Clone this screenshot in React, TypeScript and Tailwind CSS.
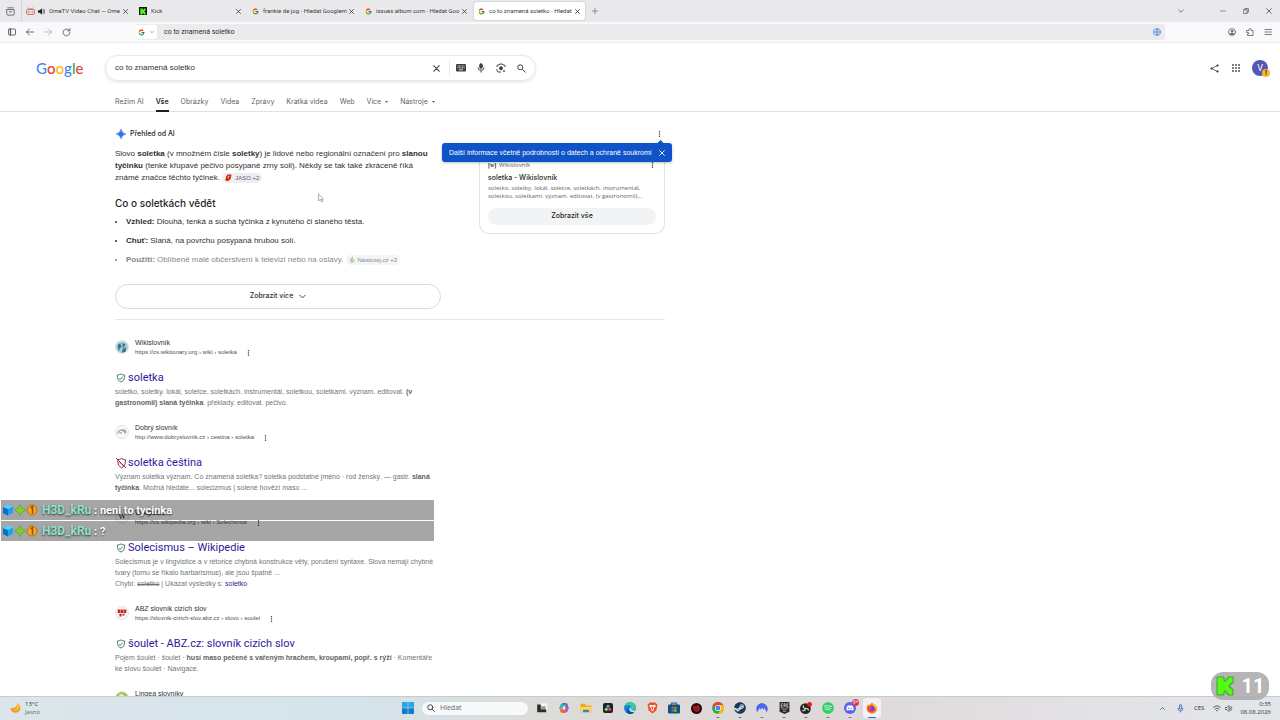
import type { ReactNode } from "react";
import { FcGoogle } from "react-icons/fc";
import { FaSteam, FaSpotify, FaDiscord } from "react-icons/fa";

const line = {
  fill: "none",
  stroke: "currentColor",
  strokeLinecap: "round" as const,
  strokeLinejoin: "round" as const,
};

function Cross({ className }: { className: string }) {
  return (
    <svg viewBox="0 0 10 10" className={className} {...line} strokeWidth="1.5">
      <path d="M1 1l8 8M9 1L1 9" />
    </svg>
  );
}

function Chevron({ className }: { className: string }) {
  return (
    <svg viewBox="0 0 10 10" className={className} {...line} strokeWidth="1.3">
      <path d="M1 3l4 4 4-4" />
    </svg>
  );
}

function Dots() {
  return (
    <svg viewBox="0 0 4 10" className="h-[6px] w-[3px]" fill="#3c4043">
      <circle cx="2" cy="1.3" r="1.2" />
      <circle cx="2" cy="5" r="1.2" />
      <circle cx="2" cy="8.7" r="1.2" />
    </svg>
  );
}

function KickLogo({ className }: { className: string }) {
  return (
    <svg viewBox="0 0 18 20" className={className}>
      <path
        d="M1 1h7v4h2V3h2V1h5v6h-2v2h-2v2h2v2h2v6h-5v-2h-2v-2H8v4H1z"
        fill="#53fc18"
        stroke="#1e7a10"
        strokeWidth=".6"
      />
    </svg>
  );
}

function Tab({ icon, title, active, sound }: { icon: ReactNode; title: string; active?: boolean; sound?: boolean }) {
  return (
    <div
      className={`flex h-[18px] w-[111px] shrink-0 items-center rounded-[3px] pr-[5px] pl-[4px] ${
        active ? "bg-white shadow-[0_0_2px_rgba(0,0,0,0.25)]" : ""
      }`}
    >
      {icon}
      {sound && (
        <svg viewBox="0 0 12 12" className="ml-[3px] h-[7px] w-[7px] shrink-0">
          <path d="M0 4h3l4-3.5v11L3 8H0z" fill="#222" />
          <path d="M8.500 3.500q2 2.500 0 5M10 1.500q3.500 4.500 0 9" stroke="#222" fill="none" />
        </svg>
      )}
      <span className="ml-[4px] min-w-0 flex-1 overflow-hidden text-[6px] leading-[10px] whitespace-nowrap text-[#3a3a40]">
        {title}
      </span>
      <button aria-label={`Zavřít ${title}`} className="ml-[2px] text-[#2b2b30]">
        <Cross className="h-[5px] w-[5px]" />
      </button>
    </div>
  );
}

function BrowserTabs() {
  const g = <FcGoogle className="h-[7px] w-[7px] shrink-0" />;
  return (
    <div className="flex h-[22px] shrink-0 items-center bg-[#e9e9eb] text-[#5b5b66]">
      <button aria-label="Firefox View" className="flex w-[21px] justify-center">
        <svg viewBox="0 0 16 16" className="h-[9px] w-[9px]" {...line} strokeWidth="1.5">
          <path d="M3 1.500h10M1.500 4.500h13v8q0 2-2 2h-9q-2 0-2-2zM6 8.500h4" />
        </svg>
      </button>
      <div className="h-full w-px bg-[#d5d5d8]" />
      <div className="flex gap-[2px]">
        <Tab
          sound
          title="OmeTV Video Chat — Ome"
          icon={
            <svg viewBox="0 0 16 14" className="h-[8px] w-[9px] shrink-0" fill="none" stroke="#c9483f" strokeWidth="1.400">
              <rect x="1" y="4" width="14" height="9" rx="2" />
              <path d="M4 1l3 3M12 1L9 4M4 7l2 1.500L4 10M12 7l-2 1.500 2 1.500" />
            </svg>
          }
        />
        <Tab
          title="Kick"
          icon={
            <span className="flex h-[8px] w-[8px] shrink-0 items-center justify-center bg-[#0b1a08]">
              <KickLogo className="h-[7px] w-[6px]" />
            </span>
          }
        />
        <Tab title="frankie de jog - Hledat Googlem" icon={g} />
        <Tab title="issues album corn - Hledat Goo" icon={g} />
        <Tab active title="co to znamená soletko - Hledat" icon={g} />
      </div>
      <button aria-label="Nový panel" className="ml-[7px]">
        <svg viewBox="0 0 10 10" className="h-[6px] w-[6px]" {...line}>
          <path d="M5 0v10M0 5h10" />
        </svg>
      </button>
      <div className="ml-auto flex items-center pr-[8px]">
        <button aria-label="Seznam panelů" className="mr-[36px]">
          <Chevron className="h-[6px] w-[6px]" />
        </button>
        <button aria-label="Minimalizovat" className="mr-[17px]">
          <svg viewBox="0 0 10 10" className="h-[6px] w-[6px]" {...line}>
            <path d="M0 5h10" />
          </svg>
        </button>
        <button aria-label="Obnovit" className="mr-[17px]">
          <svg viewBox="0 0 10 10" className="h-[6px] w-[6px]" {...line} strokeWidth="1.300">
            <path d="M1 3h6v6H1zM3 3V1h6v6H7" />
          </svg>
        </button>
        <button aria-label="Zavřít okno">
          <Cross className="h-[6px] w-[6px]" />
        </button>
      </div>
    </div>
  );
}

function Toolbar() {
  return (
    <div className="flex h-[21px] shrink-0 items-center border-b border-[#ececee] bg-[#f9f9fb] text-[#5b5b66]">
      <div className="flex w-[135px] items-center gap-[10px] pl-[8px]">
        <button aria-label="Postranní lišta">
          <svg viewBox="0 0 16 16" className="h-[8px] w-[8px]" {...line} strokeWidth="1.800">
            <rect x="1" y="2" width="14" height="12" rx="1.500" />
            <path d="M5 2v12" strokeWidth="2.500" />
          </svg>
        </button>
        <button aria-label="Zpět">
          <svg viewBox="0 0 16 16" className="h-[8px] w-[8px]" {...line} strokeWidth="1.800">
            <path d="M15 8H1M7 2L1 8l6 6" />
          </svg>
        </button>
        <button aria-label="Vpřed" className="text-[#b5b5bb]">
          <svg viewBox="0 0 16 16" className="h-[8px] w-[8px]" {...line} strokeWidth="1.800">
            <path d="M1 8h14M9 2l6 6-6 6" />
          </svg>
        </button>
        <button aria-label="Obnovit stránku">
          <svg viewBox="0 0 16 16" className="h-[9px] w-[9px]" {...line} strokeWidth="1.600">
            <path d="M14 8a6 6 0 1 1-2-4.500L14 5M14 1v4h-4" />
          </svg>
        </button>
      </div>
      <div className="mr-[63px] flex h-[16px] flex-1 items-center rounded-[3px] bg-[#ebebed] pr-[2px]">
        <button aria-label="Vyhledávač" className="flex h-[14px] w-[22px] items-center justify-center gap-[5px] rounded-[2px] bg-white">
          <FcGoogle className="h-[7px] w-[7px]" />
          <Chevron className="h-[4px] w-[4px]" />
        </button>
        <input
          aria-label="Adresa"
          defaultValue="co to znamená soletko"
          className="ml-[7px] min-w-0 flex-1 bg-transparent text-[7px] leading-[12px] text-[#2b2b30] outline-none"
        />
        <button aria-label="Přeložit" className="rounded-[2px] bg-[#e6eaf1] p-[2px] text-[#5b86d6]">
          <svg viewBox="0 0 16 16" className="h-[8px] w-[8px]" {...line} strokeWidth="1.500">
            <circle cx="8" cy="8" r="7" />
            <path d="M1 8h14M8 1Q3 8 8 15M8 1q5 7 0 14" />
          </svg>
        </button>
      </div>
      <div className="flex items-center gap-[10px] pr-[8px]">
        <button aria-label="Účet">
          <svg viewBox="0 0 16 16" className="h-[8px] w-[8px]" {...line} strokeWidth="1.500">
            <circle cx="8" cy="8" r="7" />
            <path d="M4 12q4-5 8 0z" fill="currentColor" />
            <circle cx="8" cy="6" r="1.800" fill="currentColor" />
          </svg>
        </button>
        <button aria-label="Rozšíření">
          <svg viewBox="0 0 16 16" className="h-[8px] w-[8px]" {...line} strokeWidth="1.600">
            <path d="M2 5h4V3q0-2 2-2t2 2v2h4v10H3v-3h1q2 0 2-1.500T4 9H2z" />
          </svg>
        </button>
        <button aria-label="Nabídka">
          <svg viewBox="0 0 16 16" className="h-[8px] w-[8px]" {...line} strokeWidth="1.600">
            <path d="M2 3h13M2 8h13M2 13h13" />
          </svg>
        </button>
      </div>
    </div>
  );
}

function SearchHeader() {
  return (
    <header className="shrink-0 border-b border-[#dfe1e5]">
      <div className="flex items-center pt-[12px] pr-[12px]">
        <a
          href="#"
          aria-label="Google"
          className="flex w-[105px] pl-[36px] font-['Lato',sans-serif] text-[15px] leading-[20px] font-medium"
        >
          <span className="text-[#4285f4]">G</span>
          <span className="text-[#ea4335]">o</span>
          <span className="text-[#fbbc05]">o</span>
          <span className="text-[#4285f4]">g</span>
          <span className="text-[#34a853]">l</span>
          <span className="text-[#ea4335]">e</span>
        </a>
        <form className="flex h-[26px] w-[431px] items-center rounded-full border border-[#e6e8ea] pr-[9px] pl-[9px] text-[#3c4043] shadow-[0_1px_3px_rgba(60,64,67,0.15)]">
          <input
            aria-label="Hledat"
            defaultValue="co to znamená soletko"
            className="min-w-0 flex-1 bg-transparent font-['Liberation_Sans',sans-serif] text-[8px] leading-[16px] text-[#303134] outline-none"
          />
          <button type="button" aria-label="Vymazat">
            <Cross className="h-[7px] w-[7px]" />
          </button>
          <div className="mr-[6px] ml-[9px] h-[16px] w-px bg-[#e6e8ea]" />
          <button type="button" aria-label="Klávesnice">
            <svg viewBox="0 0 20 16" className="h-[8px] w-[10px]">
              <rect width="20" height="15" rx="2" fill="#3c4043" />
              <path d="M3 4h14M3 7.500h14" stroke="#fff" strokeWidth="1.500" strokeDasharray="2 1" />
              <path d="M6 11.500h8" stroke="#fff" strokeWidth="1.500" />
            </svg>
          </button>
          <button type="button" aria-label="Hlasové vyhledávání" className="ml-[11px]">
            <svg viewBox="0 0 16 20" className="h-[10px] w-[8px]" fill="none" stroke="#3c4043" strokeWidth="2">
              <rect x="5.500" y="1.500" width="5" height="9" rx="2.500" fill="#3c4043" />
              <path d="M2 9q0 5.500 6 5.500T14 9M8 15v4" />
            </svg>
          </button>
          <button type="button" aria-label="Vyhledávání obrázkem" className="ml-[11px]">
            <svg viewBox="0 0 20 20" className="h-[10px] w-[10px]" fill="none" stroke="#3c4043" strokeWidth="2">
              <path d="M2 8V6q0-2 2-2h2l1.500-2h5L14 4h2q2 0 2 2v2M2 12v3q0 3 3 3h5" />
              <circle cx="10" cy="10.500" r="3" fill="#3c4043" />
              <circle cx="16" cy="16" r="1" fill="#3c4043" />
            </svg>
          </button>
          <button type="submit" aria-label="Hledat Googlem" className="ml-[11px]">
            <svg viewBox="0 0 18 18" className="h-[9px] w-[9px]" fill="none" stroke="#3c4043" strokeWidth="2">
              <circle cx="6.500" cy="6.500" r="5" />
              <path d="M10.500 10.500L17 17" />
            </svg>
          </button>
        </form>
        <div className="ml-auto flex items-center gap-[12px]">
          <button aria-label="Sdílet" className="mr-px">
            <svg viewBox="0 0 18 18" className="h-[9px] w-[9px]" fill="#3c4043" stroke="#3c4043" strokeWidth="1.500">
              <path d="M15 3L3 9l12 6" fill="none" />
              <circle cx="15" cy="3" r="1.500" />
              <circle cx="3" cy="9" r="1.500" />
              <circle cx="15" cy="15" r="1.500" />
            </svg>
          </button>
          <button aria-label="Aplikace Google">
            <svg viewBox="0 0 16 16" className="h-[8px] w-[8px]" fill="#3c4043">
              {[2, 8, 14].map((y) => [2, 8, 14].map((x) => <circle key={`${x}-${y}`} cx={x} cy={y} r="1.800" />))}
            </svg>
          </button>
          <button
            aria-label="Účet Google"
            className="relative h-[16px] w-[16px] rounded-full bg-[#5357b4] text-[9px] leading-[16px] text-white"
          >
            V
            <span className="absolute -right-[2px] -bottom-px h-[8px] w-[8px] rounded-full bg-[#f5b82e] text-[7px] leading-[8px] font-bold text-[#3c2a00]">
              !
            </span>
          </button>
        </div>
      </div>
      <nav className="flex gap-[12px] pt-[16px] pl-[115px] font-['Inter',sans-serif] text-[7px] leading-[10px] text-[#5f6368]">
        <a href="#">Režim AI</a>
        <a href="#" className="-mb-px h-[15px] border-b-2 border-[#1f1f1f] font-semibold text-[#1f1f1f]">
          Vše
        </a>
        <a href="#">Obrázky</a>
        <a href="#">Videa</a>
        <a href="#">Zprávy</a>
        <a href="#">Krátká videa</a>
        <a href="#">Web</a>
        <button className="flex h-[10px] items-center gap-[4px]">
          Více <Caret />
        </button>
        <button className="flex h-[10px] items-center gap-[4px]">
          Nástroje <Caret />
        </button>
      </nav>
    </header>
  );
}

function Caret() {
  return (
    <svg viewBox="0 0 6 4" className="h-[2px] w-[3px]" fill="#5f6368">
      <path d="M0 0h6L3 4z" />
    </svg>
  );
}

function Overview() {
  return (
    <section className="flex w-[550px] justify-between border-b border-[#e3e6ea] pt-[16px] pb-[10px] font-['Open_Sans',sans-serif]">
      <div className="w-[326px]">
        <h2 className="flex items-center gap-[4px] pl-px font-['Inter',sans-serif] text-[7px] leading-[12px] font-medium text-[#1f1f1f]">
          <svg viewBox="0 0 20 20" className="h-[10px] w-[10px]">
            <path d="M10 0q1.500 8.500 10 10-8.500 1.500-10 10Q8.500 11.500 0 10 8.500 8.500 10 0z" fill="#3271ea" stroke="#3271ea" />
          </svg>
          Přehled od AI
        </h2>
        <p className="mt-[8px] font-['Liberation_Sans',sans-serif] text-[8px] leading-[12px] whitespace-nowrap text-[#303134]">
          Slovo <b>soletka</b> (v množném čísle <b>soletky</b>) je lidové nebo regionální označení pro <b>slanou</b>
          <br />
          <b>tyčinku</b> (tenké křupavé pečivo posypané zrny soli). Někdy se tak také zkráceně říká
          <br />
          známé značce těchto tyčinek.{" "}
          <span className="inline-flex h-[10px] items-center gap-[3px] rounded-full bg-[#eceef1] px-[3px] align-middle text-[6px] leading-[10px] text-[#5f6368]">
            <svg viewBox="0 0 14 14" className="h-[7px] w-[7px]">
              <path d="M5 1h8l-2 9-5 4-5-1 1-7z" fill="#d8170f" />
              <path d="M6 4l3-1-1 4-3 3z" fill="#ffd54a" />
            </svg>
            JASO +2
          </span>
        </p>
        <h3 className="mt-[11px] font-['Inter',sans-serif] text-[10px] leading-[16px] font-medium text-[#1f1f1f]">
          Co o soletkách vědět
        </h3>
        <ul className="mt-[5px] flex list-disc flex-col gap-[7px] pl-[11px] font-['Liberation_Sans',sans-serif] text-[8px] leading-[12px] whitespace-nowrap text-[#303134]">
          <li>
            <b>Vzhled:</b> Dlouhá, tenká a suchá tyčinka z kynutého či slaného těsta.
          </li>
          <li>
            <b>Chuť:</b> Slaná, na povrchu posypaná hrubou solí.
          </li>
          <li className="opacity-60">
            <b>Použití:</b> Oblíbené malé občerstvení k televizi nebo na oslavy.{" "}
            <span className="inline-flex h-[10px] items-center gap-[3px] rounded-full bg-[#eceef1] px-[3px] align-middle text-[6px] leading-[10px]">
              <svg viewBox="0 0 12 14" className="h-[7px] w-[6px]">
                <path d="M8 0Q5 4 3 6q-3 5 2 8 6-1 6-6Q7 6 8 0z" fill="#5fbf4a" />
                <path d="M5 12l3-5" stroke="#fff" />
              </svg>
              Nastoxej.cz +3
            </span>
          </li>
        </ul>
        <button className="mt-[18px] flex h-[25px] w-full items-center justify-center gap-[6px] rounded-full border border-[#d2dbe6] font-['Inter',sans-serif] text-[7px] font-medium text-[#303134]">
          Zobrazit více <Chevron className="h-[7px] w-[7px]" />
        </button>
      </div>
      <aside className="relative w-[186px]">
        <button aria-label="Další možnosti" className="ml-auto flex h-[12px] w-[7px]">
          <span className="pt-[3px]">
            <Dots />
          </span>
        </button>
        <article className="mt-[10px] rounded-b-[10px] border border-t-0 border-[#dfe1e5] px-[8px] pt-[10px] pb-[8px]">
          <div className="flex h-[10px] items-center gap-[3px] text-[6px] leading-[10px] text-[#5f6368]">
            <span className="w-[8px] font-['Liberation_Serif',serif] font-bold text-[#303134]">[w]</span>
            Wikislovník
            <button aria-label="O výsledku" className="mr-[2px] ml-auto">
              <Dots />
            </button>
          </div>
          <h4 className="mt-[2px] font-['Inter',sans-serif] text-[7px] leading-[12px] font-medium text-[#1f1f1f]">
            soletka - Wikislovník
          </h4>
          <p className="text-[6px] leading-[8px] whitespace-nowrap text-[#5f6368]">
            soletko, soletky. lokál, soletce, soletkách. instrumentál,
            <br />
            soletkou, soletkami. význam. editovat. (v gastronomii)...
          </p>
          <button className="mt-[6px] h-[17px] w-full rounded-full bg-[#f1f3f4] font-['Inter',sans-serif] text-[7px] font-medium text-[#1f1f1f]">
            Zobrazit vše
          </button>
        </article>
        <div
          role="tooltip"
          className="absolute top-[15px] -right-[7px] flex h-[19px] w-[230px] items-center justify-between rounded-[3px] bg-[#0f53c9] px-[7px] font-['Liberation_Sans',sans-serif] text-[7px] leading-[10px] whitespace-nowrap text-white shadow-[0_1px_3px_rgba(0,0,0,0.25)]"
        >
          <span className="absolute -top-[2px] right-[9px] h-[5px] w-[5px] rotate-45 bg-[#0f53c9]" />
          Další informace včetně podrobností o datech a ochraně soukromí
          <button aria-label="Zavřít nápovědu">
            <Cross className="h-[6px] w-[6px]" />
          </button>
        </div>
      </aside>
    </section>
  );
}

function Shield({ bad }: { bad?: boolean }) {
  return bad ? (
    <svg viewBox="0 0 24 24" className="h-[12px] w-[12px] shrink-0" fill="none" stroke="#a32a48" strokeWidth="2">
      <path d="M6 5q4 0 7-2 3 2 8 2.500Q21 15 17 19l-4 3Q5 18 5 7M2 2l20 20M9 10l8 8" />
    </svg>
  ) : (
    <svg viewBox="0 0 20 22" className="mr-px ml-px h-[10px] w-[10px] shrink-0" fill="none" stroke="#2f7560" strokeWidth="2">
      <path d="M10 2q3 2 8 2.500Q19 16 10 20 1 16 2 4.500 7 4 10 2zM6 11l3 3 5-6" />
    </svg>
  );
}

function Result({ icon, site, url, title, bad, children }: { icon: ReactNode; site: string; url: string; title: string; bad?: boolean; children?: ReactNode }) {
  return (
    <article className="mb-[15px] font-['Liberation_Sans',sans-serif] whitespace-nowrap">
      <div className="flex items-start">
        <span className="mt-[2px] flex h-[14px] w-[14px] items-center justify-center overflow-hidden rounded-full border border-[#dfe1e5] bg-[#f8f9fa]">
          {icon}
        </span>
        <div className="ml-[6px]">
          <div className="text-[7px] leading-[10px] text-[#303134]">{site}</div>
          <div className="flex items-center gap-[10px] text-[6px] leading-[9px] text-[#4d5156]">
            {url}
            <button aria-label={`O výsledku ${site}`}>
              <Dots />
            </button>
          </div>
        </div>
      </div>
      <h3 className="mt-[13px] font-['Roboto',sans-serif] text-[11px] leading-[16px] text-[#2c1a9c]">
        <a href="#" className="flex items-center gap-px">
          <Shield bad={bad} />
          {title}
        </a>
      </h3>
      <p className="text-[7px] leading-[11px] text-[#70757a] [&_b]:text-[#5f6368]">{children}</p>
    </article>
  );
}

function Results() {
  return (
    <section className="pt-[18px]">
      <Result
        site="Wikislovník"
        url="https://cs.wiktionary.org › wiki › soletka"
        title="soletka"
        icon={
          <svg viewBox="0 0 14 14" className="h-[13px] w-[13px]">
            <rect width="14" height="14" fill="#a9cdd6" />
            <path d="M2 4l3-2 1 4-3 5zM7 2l4 1-2 4zM8 8l4-1-1 5-4 1z" fill="#2c6f91" />
            <path d="M3 9l4-4 4 6" stroke="#4e9b7b" fill="none" />
          </svg>
        }
      >
        soletko, soletky. lokál, soletce, soletkách. instrumentál, soletkou, soletkami. význam. editovat. <b>(v</b>
        <br />
        <b>gastronomii) slaná tyčinka</b>. překlady. editovat. pečivo.
      </Result>
      <Result
        bad
        site="Dobrý slovník"
        url="http://www.dobryslovnik.cz › cestina › soletka"
        title="soletka čeština"
        icon={
          <svg viewBox="0 0 14 14" className="h-[12px] w-[12px]" fill="none" strokeWidth="1.500">
            <path d="M2 9q1-5 5-4t3 4" stroke="#c99a8e" />
            <path d="M6 5q5-2 6 3M4 8h3" stroke="#9aa3a0" />
          </svg>
        }
      >
        Význam soletka význam. Co znamená soletka? soletka podstatné jméno · rod ženský. — gastr. <b>slaná</b>
        <br />
        <b>tyčinka</b>. Možná hledáte... solecizmus | solené hovězí maso ...
      </Result>
      <Result
        site="Wikipedie"
        url="https://cs.wikipedia.org › wiki › Solecismus"
        title="Solecismus – Wikipedie"
        icon={<span className="font-['Liberation_Serif',serif] text-[8px] leading-[12px] text-[#202124]">W</span>}
      >
        Solecismus je v lingvistice a v rétorice chybná konstrukce věty, porušení syntaxe. Slova nemají chybné
        <br />
        tvary (tomu se říkalo barbarismus), ale jsou špatně ...
        <br />
        Chybí: <s>soletko</s> | Ukázat výsledky s:{" "}
        <a href="#" className="text-[#2c1a9c]">
          soletko
        </a>
      </Result>
      <Result
        site="ABZ slovník cizích slov"
        url="https://slovnik-cizich-slov.abz.cz › slovo › soulet"
        title="šoulet - ABZ.cz: slovník cizích slov"
        icon={
          <svg viewBox="0 0 14 14" className="h-[12px] w-[12px]" fill="#c8281e">
            <path d="M2 3h3v4H2zM5.500 3h3v4h-3zM9 3h3v4H9zM4 8h2.500v3H4zM7.500 8H10v2H7.500z" />
          </svg>
        }
      >
        Pojem šoulet · šoulet · <b>husí maso pečené s vařeným hrachem, kroupami, popř. s rýží</b> · Komentáře
        <br />
        ke slovu šoulet · Navigace.
      </Result>
      <Result
        site="Lingea slovníky"
        url="https://slovniky.lingea.cz"
        title="soletka"
        icon={
          <svg viewBox="0 0 14 14" className="h-[14px] w-[14px]">
            <rect width="14" height="14" fill="#9cc84a" />
            <path d="M4 4q4-2 5 2l-2 4" stroke="#fff" strokeWidth="1.500" fill="none" />
          </svg>
        }
      />
    </section>
  );
}

function ChatLine({ text }: { text: string }) {
  return (
    <div className="flex h-[20px] items-center bg-black/35 pl-px text-[12px] font-bold whitespace-pre text-white [text-shadow:0_1px_2px_rgba(0,0,0,0.7)]">
      <svg viewBox="0 0 72 24" className="h-[12px] w-[36px]">
        <path d="M2 6l10-5 10 4v13l-10 5-10-5z" fill="#18a4f0" />
        <path d="M2 6l10 4v13L2 18z" fill="#0d6fc4" />
        <path d="M2 6l10-5 10 4-10 5z" fill="#5cd0fb" />
        <path d="M36 1q2 8 11 11-9 3-11 11-2-8-11-11 9-3 11-11z" fill="#7ed321" stroke="#3d9c12" />
        <circle cx="60" cy="12" r="10" fill="#f5a623" stroke="#b86f0a" strokeWidth="2" />
        <path d="M57 8l4-3v14" stroke="#8a5208" strokeWidth="3" fill="none" />
      </svg>
      <p className="ml-[4px]">
        <span className="text-[#8fe3cb]">H3D_kRu</span>
        <span className="text-[11px]"> : {text}</span>
      </p>
    </div>
  );
}

function TaskbarApp({ label, running, active, children }: { label: string; running?: boolean; active?: boolean; children: ReactNode }) {
  return (
    <button
      aria-label={label}
      className={`relative flex h-[20px] w-[18px] items-center justify-center rounded-[3px] ${active ? "bg-white/60" : ""}`}
    >
      {children}
      {(running || active) && (
        <span
          className={`absolute bottom-0 left-1/2 h-px -translate-x-1/2 rounded-full ${active ? "w-[8px] bg-[#1976c5]" : "w-[3px] bg-[#777]"}`}
        />
      )}
    </button>
  );
}

const ic = "h-[12px] w-[12px]";

function Taskbar() {
  return (
    <footer className="grid h-[24px] shrink-0 grid-cols-[1fr_auto_1fr] items-center border-t border-[#c3cdcf] bg-[linear-gradient(90deg,#dbe6ea_0%,#d5e3ec_28%,#dcdcd8_42%,#dfd8da_65%,#e3e3e6_88%,#e2e6ea_100%)] pb-px font-['Open_Sans',sans-serif] text-[#333]">
      <div className="flex items-center gap-[4px] pl-[9px] text-[6px] leading-[8px]">
        <svg viewBox="0 0 20 20" className={ic}>
          <path d="M14 2q1 8-12 9 2 7 9 7 8-1 8-8 0-6-5-8z" fill="#f29a1f" />
          <path d="M14 2q2 9-8 12 10 1 12-7-1-4-4-5z" fill="#ffc53d" />
        </svg>
        <div>
          <div>13°C</div>
          <div className="text-[#666]">Jasno</div>
        </div>
      </div>
      <div className="flex items-center gap-[4px]">
        <TaskbarApp label="Start">
          <svg viewBox="0 0 20 20" className={ic}>
            <path d="M0 0h9.500v9.500H0zM10.500 0H20v9.500h-9.500z" fill="#2ba5e6" />
            <path d="M0 10.500h9.500V20H0zM10.500 10.500H20V20h-9.500z" fill="#0c7fd0" />
          </svg>
        </TaskbarApp>
        <label className="flex h-[15px] w-[108px] items-center gap-[5px] rounded-full border border-[#d9dde0] bg-[#f6f8fa] pl-[5px]">
          <svg viewBox="0 0 16 16" className="h-[8px] w-[8px]" {...line} strokeWidth="1.800">
            <circle cx="6.500" cy="6.500" r="5" />
            <path d="M10.500 10.500L15 15" />
          </svg>
          <input
            aria-label="Hledat v počítači"
            placeholder="Hledat"
            className="w-[80px] bg-transparent text-[7px] leading-[10px] outline-none placeholder:text-[#666]"
          />
        </label>
        <TaskbarApp label="Zobrazení úloh">
          <svg viewBox="0 0 20 20" className={ic}>
            <rect x="7" y="2" width="12" height="13" fill="#f5f5f5" />
            <path d="M2 4h6v8h9v5H2z" fill="#2a2a2a" />
            <rect x="8" y="7" width="8" height="5" fill="#9a9a9a" />
          </svg>
        </TaskbarApp>
        <TaskbarApp label="Copilot">
          <svg viewBox="0 0 20 20" className={ic} fill="none" strokeWidth="5" strokeLinejoin="round">
            <path d="M7 4h6l2 5" stroke="#2878e0" />
            <path d="M7 4L4 12" stroke="#27b8c8" />
            <path d="M4 12h4l4-7" stroke="#e8b330" strokeWidth="3" />
            <path d="M13 16H7l-2-4" stroke="#f0633f" />
            <path d="M13 16l3-8" stroke="#b452d8" />
            <path d="M9 12l2-4" stroke="#f3f0f0" strokeWidth="2.500" />
          </svg>
        </TaskbarApp>
        <TaskbarApp label="Průzkumník souborů">
          <svg viewBox="0 0 20 20" className={ic}>
            <path d="M1 3h7l2 3h9v11H1z" fill="#e8a81c" />
            <path d="M1 8h18v9H1z" fill="#ffd55a" />
            <path d="M5 13h10v4H5z" fill="#2a86d8" />
          </svg>
        </TaskbarApp>
        <TaskbarApp label="DaVinci Resolve">
          <svg viewBox="0 0 20 20" className="h-[10px] w-[10px]">
            <rect width="20" height="20" rx="4" fill="#1d222b" />
            <circle cx="10" cy="6.500" r="3" fill="#59b8e8" />
            <circle cx="6.500" cy="12.500" r="3" fill="#c6d84a" />
            <circle cx="13.500" cy="12.500" r="3" fill="#e85050" />
          </svg>
        </TaskbarApp>
        <TaskbarApp label="Microsoft Edge">
          <svg viewBox="0 0 20 20" className={ic}>
            <circle cx="10" cy="10" r="10" fill="#1686d8" />
            <path d="M0 9Q2 0 11 0q9 1 9 9 0 4-5 4-3 0-3-2 1-5-4-6-6 0-8 4z" fill="#3fc9a0" />
            <path d="M7 9q-1 8 10 8-4 4-9 3-6-4-1-11z" fill="#0b4fa0" />
            <path d="M12 11q-1 4 7 3l-2 3q-8 0-8-5 0-3 3-3z" fill="#dfe3e2" />
          </svg>
        </TaskbarApp>
        <TaskbarApp label="Brave">
          <svg viewBox="0 0 20 22" className="h-[12px] w-[11px]">
            <path d="M5 1h10l4 4-2 10-7 6-7-6L1 5z" fill="#f04c23" />
            <path d="M5 5l5 1 5-1 1 3-4 4 1 2-3 3-3-3 1-2-4-4z" fill="#fff" />
            <path d="M7 8l3 1 3-1-2 3v3H9v-3z" fill="#f04c23" />
          </svg>
        </TaskbarApp>
        <TaskbarApp label="Microsoft Store">
          <svg viewBox="0 0 20 20" className={ic}>
            <path d="M6 5V2h8v3" stroke="#2c6fa8" strokeWidth="2" fill="none" />
            <rect y="4" width="20" height="15" rx="2" fill="#174f80" />
            <path d="M6 8h3.500v3.500H6z" fill="#f25022" />
            <path d="M10.500 8H14v3.500h-3.500z" fill="#7fba00" />
            <path d="M6 12.500h3.500V16H6z" fill="#00a4ef" />
            <path d="M10.500 12.500H14V16h-3.500z" fill="#ffb900" />
          </svg>
        </TaskbarApp>
        <TaskbarApp label="Hra">
          <svg viewBox="0 0 20 20" className="h-[11px] w-[11px]">
            <circle cx="10" cy="10" r="10" fill="#26090c" />
            <path d="M5 6l4 2 4-3 2 5-3 5-4-1-3-3z" fill="#7d1420" stroke="#c4202f" strokeWidth="2" />
          </svg>
        </TaskbarApp>
        <TaskbarApp label="Google Chrome" running>
          <svg viewBox="0 0 20 20" className={ic}>
            <circle cx="10" cy="10" r="10" fill="#34a853" />
            <path d="M1.300 5A10 10 0 0 1 18.700 5H10l-4 7.500z" fill="#ea4335" />
            <path d="M18.700 5A10 10 0 0 1 10 20l4.300-7.500L10 5z" fill="#fbbc05" />
            <circle cx="10" cy="10" r="5" fill="#fff" />
            <circle cx="10" cy="10" r="4" fill="#4285f4" />
          </svg>
        </TaskbarApp>
        <TaskbarApp label="Steam" running>
          <FaSteam className={`${ic} text-[#15395e]`} />
        </TaskbarApp>
        <TaskbarApp label="NordVPN" running>
          <svg viewBox="0 0 20 20" className={ic}>
            <path d="M2 17Q-2 8 4 4q6-5 12 0 6 5 2 13l-4-7-2 3-2-4-2 4-2-3z" fill="#4a66f5" />
          </svg>
        </TaskbarApp>
        <TaskbarApp label="Epic Games" running>
          <svg viewBox="0 0 20 22" className="h-[12px] w-[11px]">
            <path d="M1 0h18v18l-9 4-9-4z" fill="#2b2b2b" />
            <path d="M7 3H4v7h3M4 6.500h2.500M9 10V3h2v4H9M13 3v7M17 4V3h-2v7h2V9M5 13h10M7 17h6" stroke="#fff" fill="none" />
          </svg>
        </TaskbarApp>
        <TaskbarApp label="OBS Studio" running>
          <svg viewBox="0 0 20 20" className={ic}>
            <circle cx="9" cy="11" r="9" fill="#252525" />
            <path d="M9 11q-5-1-3-5M9 11q5-1 5 3M9 11q-1 5-5 3" stroke="#ddd" strokeWidth="2" fill="none" />
            <circle cx="16" cy="4" r="4" fill="#f01818" />
          </svg>
        </TaskbarApp>
        <TaskbarApp label="Spotify" running>
          <FaSpotify className={`${ic} text-[#1ed760]`} />
        </TaskbarApp>
        <TaskbarApp label="Discord" running>
          <span className="flex h-[12px] w-[12px] items-center justify-center rounded-full bg-[#5865f2] text-white">
            <FaDiscord className="h-[8px] w-[8px]" />
          </span>
          <span className="absolute top-px right-0 h-[7px] w-[7px] rounded-full bg-[#d43c52] text-[5px] leading-[7px] text-white">
            9+
          </span>
        </TaskbarApp>
        <TaskbarApp label="Firefox" active>
          <svg viewBox="0 0 20 20" className={ic}>
            <path d="M3 4l3 1 4-4q1 3 5 3 5 5 3 10-3 6-9 5-8-1-8-9z" fill="#ff7a1a" />
            <path d="M10 1q2 3 5 3 5 5 3 10-1-5-5-6z" fill="#ffc62e" />
            <circle cx="10" cy="11" r="4.500" fill="#7a3be0" />
            <path d="M2 8q4-1 6 1l3 1q-2 3-5 2 2 4 7 3-4 4-8 1Q2 13 2 8z" fill="#f5414e" />
          </svg>
        </TaskbarApp>
      </div>
      <div className="flex items-center justify-end pr-[9px] text-[6px] leading-[8px]">
        <button aria-label="Skryté ikony" className="mr-[12px]">
          <Chevron className="h-[5px] w-[5px] rotate-180" />
        </button>
        <svg viewBox="0 0 12 16" className="mr-[10px] h-[9px] w-[7px]" fill="none" stroke="#4a62b8" strokeWidth="1.500">
          <rect x="4" y="1" width="4" height="8" rx="2" fill="#b9c6ee" />
          <path d="M1.500 7q0 5 4.500 5t4.500-5M6 12v3" />
        </svg>
        <span className="mr-[9px]">CES</span>
        <svg viewBox="0 0 16 14" className="mr-[4px] h-[7px] w-[8px]" {...line} strokeWidth="1.500">
          <path d="M1 5q7-7 14 0M4 8q4-4 8 0M7 11q1-1 2 0" />
        </svg>
        <svg viewBox="0 0 16 14" className="mr-[7px] h-[7px] w-[8px]" {...line} strokeWidth="1.300">
          <path d="M1 5h3l4-4v12L4 9H1zM10 5q2 2 0 4M12 3q4 4 0 8" />
        </svg>
        <div className="text-right">
          <div>0:35</div>
          <div>08.08.2026</div>
        </div>
      </div>
    </footer>
  );
}

export default function App() {
  return (
    <div className="relative flex h-screen flex-col overflow-hidden bg-white font-['Roboto',sans-serif]">
      <BrowserTabs />
      <Toolbar />
      <SearchHeader />
      <main className="min-h-0 flex-1 overflow-hidden pl-[115px]">
        <Overview />
        <Results />
      </main>
      <Taskbar />

      <div className="absolute top-[500px] left-px flex w-[433px] flex-col gap-px">
        <ChatLine text="neni to tycinka" />
        <ChatLine text="?" />
      </div>

      <div className="absolute right-[11px] bottom-[20px] flex h-[28px] w-[58px] items-center justify-center gap-[8px] rounded-[12px] bg-[#adadad]/90">
        <KickLogo className="h-[20px] w-[18px]" />
        <span className="text-[20px] leading-[28px] font-bold text-white">11</span>
      </div>

      <svg viewBox="0 0 10 16" className="absolute top-[193px] left-[318px] h-[10px] w-[6px]">
        <path d="M1 1v12l3-3 2 5 2-1-2-4h3z" fill="#fff" stroke="#777" />
      </svg>
    </div>
  );
}
